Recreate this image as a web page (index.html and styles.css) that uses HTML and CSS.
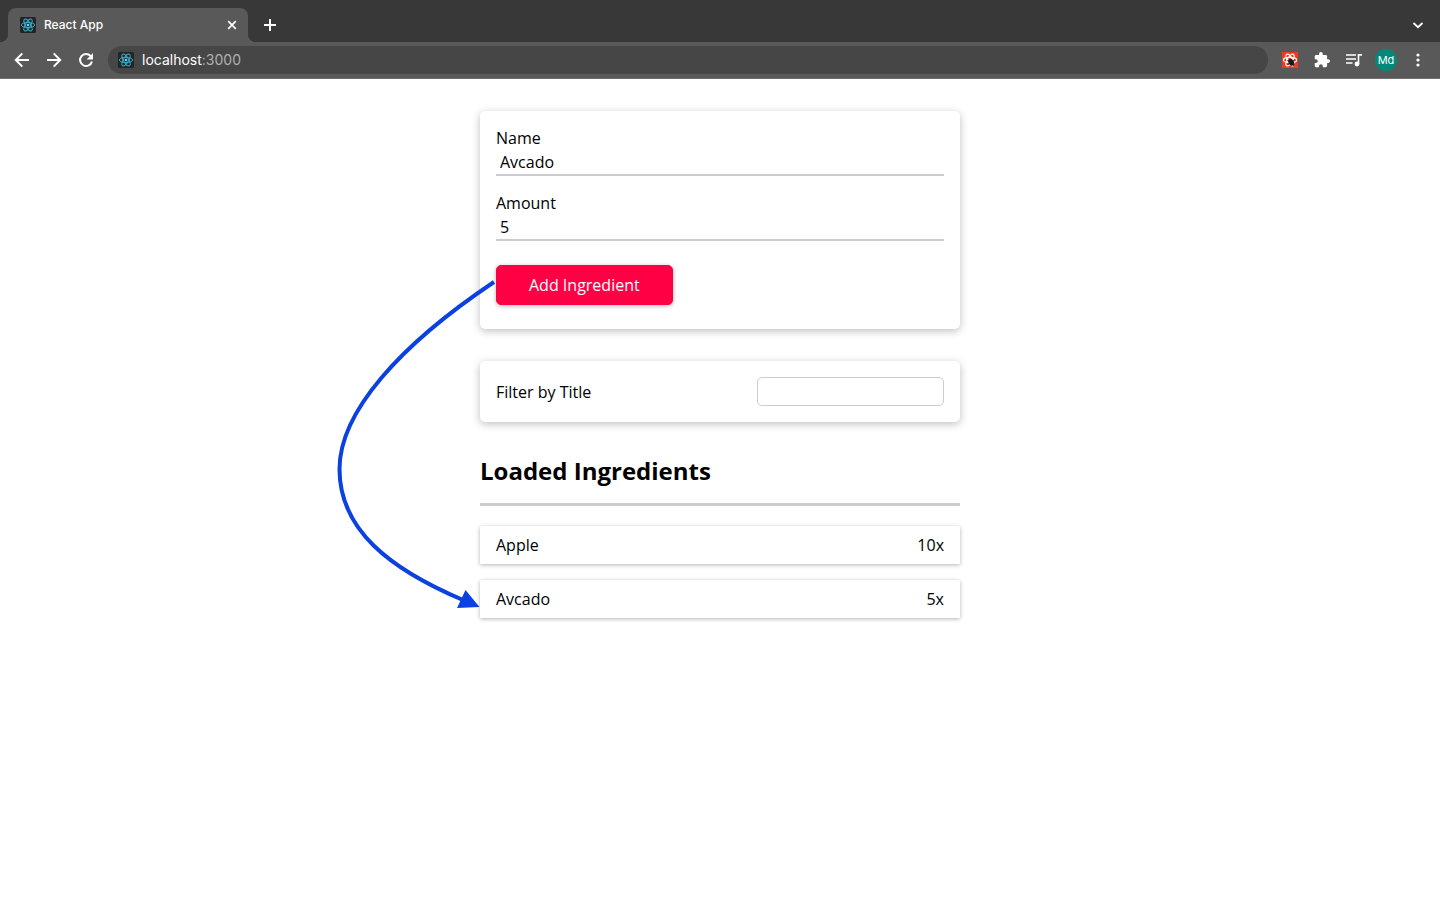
FILE: index.html
```html
<!DOCTYPE html>
<html lang="en">
<head>
<meta charset="utf-8">
<title>React App</title>
<link rel="stylesheet" href="styles.css">
</head>
<body>
<svg class="defs" aria-hidden="true">
  <symbol id="react" viewBox="0 0 16 16">
    <rect width="16" height="16" rx="1.5" fill="#222426"/>
    <g fill="none" stroke="#3cb4d0" stroke-width="0.9">
      <ellipse cx="8" cy="8" rx="6.7" ry="2.6"/>
      <ellipse cx="8" cy="8" rx="6.7" ry="2.6" transform="rotate(60 8 8)"/>
      <ellipse cx="8" cy="8" rx="6.7" ry="2.6" transform="rotate(120 8 8)"/>
    </g>
    <circle cx="8" cy="8" r="1.3" fill="#61dafb"/>
  </symbol>
</svg>
<header class="browser">
  <div class="tabs">
    <div class="tab">
      <svg class="icon16"><use href="#react"/></svg>
      <span class="tab-title">React App</span>
      <button class="icon-button close" aria-label="Close tab">
        <svg class="icon16" viewBox="0 0 16 16"><path d="M4.2 4.2l7.6 7.6M11.8 4.2l-7.6 7.6" fill="none" stroke="#fff" stroke-width="1.7"/></svg>
      </button>
    </div>
    <button class="icon-button new-tab" aria-label="New tab">
      <svg class="icon16" viewBox="0 0 16 16"><path d="M8 2v12M2 8h12" fill="none" stroke="#fff" stroke-width="2"/></svg>
    </button>
    <button class="icon-button tab-search" aria-label="Search tabs">
      <svg class="icon16" viewBox="0 0 16 16"><path d="M3.5 6l4.5 4.2L12.500 6" fill="none" stroke="#fff" stroke-width="1.8"/></svg>
    </button>
  </div>
  <div class="toolbar">
    <div class="nav">
      <button class="icon-button" aria-label="Back">
        <svg class="icon16" viewBox="0 0 16 16"><path d="M15 8H2M8.300 1.400L1.800 8l6.500 6.600" fill="none" stroke="#fff" stroke-width="2"/></svg>
      </button>
      <button class="icon-button" aria-label="Forward">
        <svg class="icon16" viewBox="0 0 16 16"><path d="M1 8h13M7.700 1.400L14.200 8l-6.500 6.600" fill="none" stroke="#fff" stroke-width="2"/></svg>
      </button>
      <button class="icon-button" aria-label="Reload">
        <svg class="icon16" viewBox="0 0 16 16"><path d="M12.600 4A6 6 0 1 0 13.900 9.400" fill="none" stroke="#fff" stroke-width="2"/><path d="M15 1v6.400H8.600z" fill="#fff"/></svg>
      </button>
    </div>
    <div class="address">
      <svg class="icon16"><use href="#react"/></svg>
      <span class="url">localhost<span class="port">:3000</span></span>
    </div>
    <div class="actions">
      <button class="icon-button" aria-label="React Developer Tools">
        <svg class="icon16" viewBox="0 0 16 16">
          <rect width="16" height="16" fill="#f03a1f"/>
          <g fill="none" stroke="#fff" stroke-width="1.200">
            <ellipse cx="8" cy="8" rx="6.600" ry="2.600"/>
            <ellipse cx="8" cy="8" rx="6.600" ry="2.600" transform="rotate(60 8 8)"/>
            <ellipse cx="8" cy="8" rx="6.600" ry="2.600" transform="rotate(120 8 8)"/>
          </g>
          <ellipse cx="9.200" cy="10.400" rx="2.700" ry="3.500" fill="#201715" transform="rotate(-25 9.200 10.400)"/>
          <path d="M5.500 8.500l7.500 4M5.500 12.500l7.200-4.500M7 6.500l5 7.500" stroke="#201715" stroke-width="1"/>
        </svg>
      </button>
      <button class="icon-button" aria-label="Extensions">
        <svg class="icon16" viewBox="1 1 22 22"><path fill="#fff" d="M20.500 11H19V7c0-1.100-.9-2-2-2h-4V3.500a2.500 2.500 0 0 0-5 0V5H4c-1.100 0-2 .9-2 2v3.800h1.500a2.700 2.700 0 0 1 0 5.400H2V20c0 1.100.9 2 2 2h3.800v-1.500a2.700 2.700 0 0 1 5.400 0V22H17c1.100 0 2-.9 2-2v-4h1.500a2.500 2.500 0 0 0 0-5z"/></svg>
      </button>
      <button class="icon-button" aria-label="Media controls">
        <svg class="icon16" viewBox="0 0 16 16"><path d="M0 3h10M0 7h10M0 11h6.500" fill="none" stroke="#fff" stroke-width="1.600"/><path d="M12.500 12V2.900H16" fill="none" stroke="#fff" stroke-width="1.600"/><circle cx="11" cy="12" r="2.400" fill="#fff"/></svg>
      </button>
      <button class="avatar" aria-label="Profile">Md</button>
      <button class="icon-button" aria-label="Menu">
        <svg class="icon16" viewBox="0 0 16 16"><g fill="#fff"><circle cx="8" cy="3" r="1.600"/><circle cx="8" cy="8" r="1.600"/><circle cx="8" cy="13" r="1.600"/></g></svg>
      </button>
    </div>
  </div>
</header>
<main class="app">
  <form class="card ingredient-form">
    <div class="field">
      <label for="name">Name</label>
      <input type="text" id="name" value="Avcado">
    </div>
    <div class="field">
      <label for="amount">Amount</label>
      <input type="text" inputmode="numeric" id="amount" value="5">
    </div>
    <button class="submit" type="button">Add Ingredient</button>
  </form>
  <section class="card search">
    <label for="filter">Filter by Title</label>
    <input type="text" id="filter">
  </section>
  <section class="ingredients">
    <h2>Loaded Ingredients</h2>
    <ul>
      <li><span>Apple</span><span>10x</span></li>
      <li><span>Avcado</span><span>5x</span></li>
    </ul>
  </section>
  <svg class="arrow" width="160" height="332" viewBox="336 279 160 332" aria-hidden="true">
    <path d="M494 282C400 345 339.500 412 339.500 469C339.500 530 390 569 463 600" fill="none" stroke="#0b41e0" stroke-width="4"/>
    <path d="M465.500 590L479.500 607L457 608z" fill="#0b41e0"/>
  </svg>
</main>
</body>
</html>
```

FILE: styles.css
```css
* { box-sizing: border-box; }
body {
  margin: 0;
  background: #fff;
  color: #000;
  font: 16px/22px "Open Sans", sans-serif;
}
button, input { font: inherit; }
.defs { position: absolute; width: 0; height: 0; }
.icon16 { display: block; width: 16px; height: 16px; flex: none; }
.icon-button { padding: 0; border: 0; background: none; color: #fff; }

.browser { background: #383838; font-family: Inter, sans-serif; }
.tabs { display: flex; align-items: center; height: 42px; padding: 8px 14px 0 8px; }
.tab {
  position: relative;
  display: flex;
  align-items: center;
  gap: 8px;
  width: 240px;
  height: 34px;
  padding: 0 8px 0 12px;
  border-radius: 8px 8px 0 0;
  background: #595959;
  color: #fff;
  font-size: 12px;
  font-weight: 500;
}
.tab::before, .tab::after {
  content: "";
  position: absolute;
  bottom: 0;
  width: 8px;
  height: 8px;
}
.tab::before { left: -8px; background: radial-gradient(circle at 0 0, #383838 8px, #595959 8px); }
.tab::after { right: -8px; background: radial-gradient(circle at 100% 0, #383838 8px, #595959 8px); }
.close { margin-left: auto; }
.new-tab { margin-left: 14px; }
.tab-search { margin-left: auto; }

.toolbar {
  display: flex;
  align-items: center;
  height: 37px;
  padding: 0 14px;
  border-bottom: 1px solid #6f6f6f;
  background: #595959;
}
.nav { display: flex; gap: 16px; }
.address {
  display: flex;
  align-items: center;
  gap: 8px;
  flex: 1;
  height: 28px;
  margin: 0 14px;
  padding: 0 10px;
  border-radius: 14px;
  background: #464646;
  color: #fff;
  font-size: 14px;
}
.port { color: #b0b0b0; }
.actions { display: flex; align-items: center; gap: 16px; }
.avatar {
  width: 22px;
  height: 22px;
  margin: 0 -3px;
  padding: 0;
  border: 0;
  border-radius: 50%;
  background: #00897b;
  color: #fff;
  font-size: 11px;
  line-height: 22px;
}

.app { position: relative; width: 480px; max-width: 100%; margin: 32px auto; }
.card {
  border-radius: 5px;
  box-shadow: 0 2px 8px rgba(0, 0, 0, 0.26);
  background: #fff;
  padding: 16px;
}
.ingredient-form { padding-bottom: 24px; }
.field { margin-bottom: 16px; }
.field label { display: block; }
.field input {
  display: block;
  width: 100%;
  height: 27px;
  padding: 2px 4px;
  border: 0;
  border-bottom: 2px solid #ccc;
  background: none;
  outline: none;
}
.submit {
  display: block;
  height: 40px;
  margin-top: 24px;
  padding: 0 32px;
  border: 1px solid #ff0044;
  border-radius: 5px;
  background: #ff0044;
  color: #fff;
  box-shadow: 0 1px 4px rgba(0, 0, 0, 0.3);
}
.search {
  display: flex;
  align-items: center;
  justify-content: space-between;
  margin-top: 32px;
}
.search input {
  width: 187px;
  height: 29px;
  padding: 2px 4px;
  border: 1px solid #ccc;
  border-radius: 5px;
  background: #fff;
}
.ingredients { margin-top: 32px; }
.ingredients h2 {
  margin: 0 0 20px;
  padding-bottom: 16px;
  border-bottom: 3px solid #ccc;
  font-size: 24px;
  line-height: 33px;
  font-weight: 700;
}
.ingredients ul { display: grid; gap: 16px; margin: 0; padding: 0; list-style: none; }
.ingredients li {
  display: flex;
  justify-content: space-between;
  padding: 8px 16px;
  box-shadow: 0 1px 4px rgba(0, 0, 0, 0.3);
}
.arrow { position: absolute; left: -144px; top: 168px; pointer-events: none; }
```
